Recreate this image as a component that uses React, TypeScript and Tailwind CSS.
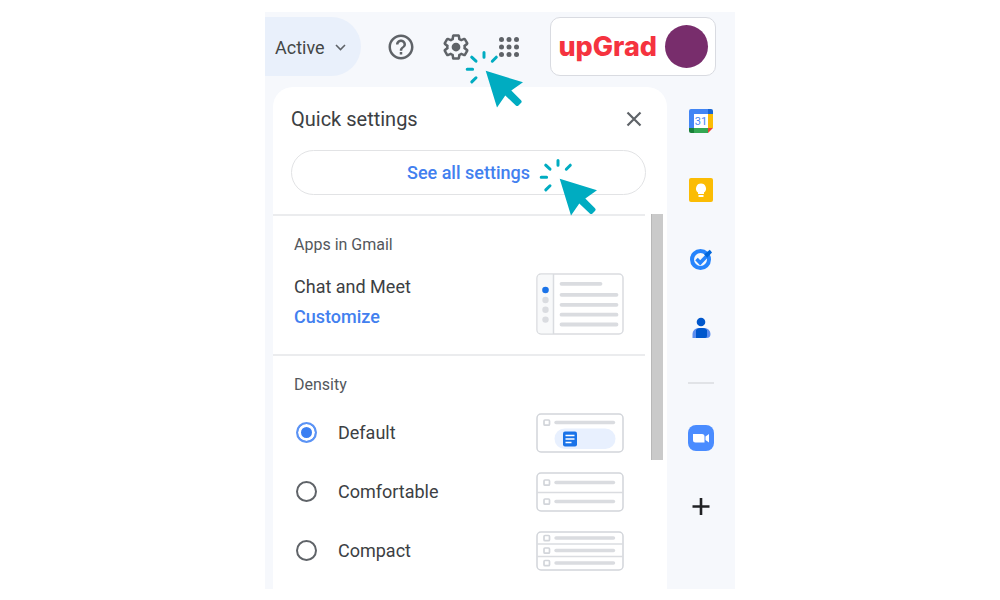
import { useState } from "react";

const GEAR =
  "M13.85 22.25h-3.7c-.74 0-1.36-.54-1.45-1.27l-.27-1.89c-.27-.14-.53-.29-.79-.46l-1.8.72c-.7.26-1.47-.03-1.81-.65L2.2 15.53c-.35-.66-.2-1.44.36-1.88l1.53-1.19c-.01-.15-.02-.3-.02-.46 0-.15.01-.31.02-.46l-1.52-1.19c-.59-.45-.74-1.26-.37-1.88l1.85-3.19c.34-.62 1.11-.9 1.79-.63l1.81.73c.26-.17.52-.32.78-.46l.27-1.91c.09-.7.71-1.25 1.44-1.25h3.7c.74 0 1.36.54 1.45 1.27l.27 1.89c.27.14.53.29.79.46l1.8-.72c.71-.26 1.48.03 1.82.65l1.84 3.18c.36.66.2 1.44-.36 1.88l-1.52 1.19c.01.15.02.3.02.46s-.01.31-.02.46l1.52 1.19c.56.45.72 1.23.37 1.86l-1.86 3.22c-.34.62-1.11.9-1.8.63l-1.8-.72c-.26.17-.52.32-.78.46l-.27 1.91c-.1.68-.72 1.22-1.46 1.22zm-3.23-2h2.76l.37-2.55.53-.22c.44-.18.88-.44 1.34-.78l.45-.34 2.38.96 1.38-2.4-2.03-1.58.07-.56c.03-.26.06-.51.06-.78s-.03-.53-.06-.78l-.07-.56 2.03-1.58-1.39-2.4-2.39.96-.45-.35c-.42-.32-.87-.58-1.33-.77l-.52-.22-.37-2.55h-2.76l-.37 2.55-.53.21c-.44.19-.88.44-1.34.79l-.45.33-2.38-.95-1.39 2.39 2.03 1.58-.07.56a7 7 0 0 0-.06.79c0 .26.02.53.06.78l.07.56-2.03 1.58 1.38 2.4 2.39-.96.45.35c.43.33.86.58 1.33.77l.53.22.38 2.55z";

function ClickCursor() {
  return (
    <svg width="60" height="60" viewBox="0 0 60 60" aria-hidden="true">
      <path
        d="M21.7 21.7 59 33.3 47.3 41.6 57 51.2Q58.3 52.6 57.2 53.8L54.5 56.5Q53.2 57.7 51.8 56.4L41.3 46.6 33 58.6Z"
        fill="#00acc1"
      />
      <path
        d="M3.2 20.3h5.4M7.7 8.2l4.3 4M20 3.4v4.8M32.3 8.2l-4 4M12 28.8l-4.2 4.1"
        stroke="#00acc1"
        strokeWidth="3"
        strokeLinecap="round"
        fill="none"
      />
    </svg>
  );
}

function HelpIcon() {
  return (
    <svg width="30" height="30" viewBox="0 0 24 24" fill="#5f6368" aria-hidden="true">
      <path d="M11 18h2v-2h-2v2zm1-16C6.48 2 2 6.48 2 12s4.48 10 10 10 10-4.48 10-10S17.52 2 12 2zm0 18c-4.41 0-8-3.59-8-8s3.59-8 8-8 8 3.59 8 8-3.59 8-8 8zm0-14c-2.21 0-4 1.79-4 4h2c0-1.1.9-2 2-2s2 .9 2 2c0 2-3 1.75-3 5h2c0-2.25 3-2.5 3-5 0-2.21-1.79-4-4-4z" />
    </svg>
  );
}

function AppsIcon() {
  const at = [6, 12, 18];
  return (
    <svg width="30" height="30" viewBox="0 0 24 24" fill="#5f6368" aria-hidden="true">
      {at.map((y) => at.map((x) => <circle key={`${x}-${y}`} cx={x} cy={y} r="2" />))}
    </svg>
  );
}

function CalendarIcon() {
  return (
    <svg width="24" height="24" viewBox="0 0 24 24" aria-hidden="true">
      <path d="M2 0H19V5H5V19H0V2Q0 0 2 0Z" fill="#4285f4" />
      <path d="M19 0H22Q24 0 24 2V5H19Z" fill="#1967d2" />
      <path d="M19 5H24V19H19Z" fill="#fbbc04" />
      <path d="M5 19H19V24H5Z" fill="#34a853" />
      <path d="M0 19H5V24H2Q0 24 0 22Z" fill="#188038" />
      <path d="M19 19H24L19 24Z" fill="#ea4335" />
      <path d="M5 5H19V19H5Z" fill="#fff" />
      <text x="12" y="16" textAnchor="middle" fontSize="11" fontFamily="Roboto, sans-serif" fill="#4285f4">
        31
      </text>
    </svg>
  );
}

function KeepIcon() {
  return (
    <svg width="24" height="24" viewBox="0 0 24 24" aria-hidden="true">
      <rect width="24" height="24" rx="2" fill="#fbbc04" />
      <path d="M12 5.5a5 5 0 0 0-3 9V16h6v-1.5a5 5 0 0 0-3-9ZM9.5 17h5v2h-5Z" fill="#fff" />
    </svg>
  );
}

function TasksIcon() {
  return (
    <svg width="24" height="24" viewBox="0 0 24 24" fill="none" aria-hidden="true">
      <circle cx="11.5" cy="12.5" r="8.5" stroke="#2684fc" strokeWidth="4" />
      <path d="m7.5 12 3.7 3.8 8-8.3" stroke="#2684fc" strokeWidth="3.6" />
      <path d="m15.2 7.5 5.6-4.8 2.2 2.7-4.800 5.300Z" fill="#0066da" />
    </svg>
  );
}

function ContactsIcon() {
  return (
    <svg width="24" height="24" viewBox="0 0 24 24" aria-hidden="true">
      <circle cx="12" cy="6" r="4.3" fill="#0057cc" />
      <path d="M3.5 22v-4a6 6 0 0 1 6-6h6a6 6 0 0 1 6 6q0 4-4 4Z" fill="#5b8def" />
      <path d="M7 22v-8q1.500-2 4-2h3q2.500 0 4 2v6q0 2-2 2Z" fill="#0057cc" />
    </svg>
  );
}

function ZoomIcon() {
  return (
    <svg width="26" height="26" viewBox="0 0 26 26" aria-hidden="true">
      <rect width="26" height="26" rx="8" fill="#4a8cff" />
      <path d="M5 9h9q2.500 0 2.500 2.500V17.500H7.500Q5 17.500 5 15ZM17.500 11.500 21 9v8.500l-3.500-2.500Z" fill="#fff" />
    </svg>
  );
}

function PlusIcon() {
  return (
    <svg width="24" height="24" viewBox="0 0 24 24" aria-hidden="true">
      <path d="M12 4v17M3.5 12.5h17" stroke="#202124" strokeWidth="2.6" />
    </svg>
  );
}

function LayoutThumb() {
  return (
    <svg width="88" height="62" viewBox="0 0 88 62" className="shrink-0" aria-hidden="true">
      <rect x="1" y="1" width="86" height="60" rx="4" fill="#fff" stroke="#dadce0" strokeWidth="1.5" />
      <path d="M17.5 1.7H5Q1.7 1.7 1.7 5V57Q1.7 60.3 5 60.3H17.5Z" fill="#f8f9fa" />
      <path d="M17.5 1V61" stroke="#dadce0" strokeWidth="1.5" />
      <circle cx="9.5" cy="17" r="3.3" fill="#1a73e8" />
      {[27, 36.8, 46.6].map((y) => (
        <circle key={y} cx="9.5" cy={y} r="3.2" fill="#dadce0" />
      ))}
      <path
        d="M25.5 10.8h39M25.5 21.8h55M25.5 31.8h55M25.5 41.7h55M25.5 51.5h55"
        stroke="#dadce0"
        strokeWidth="3.8"
        strokeLinecap="round"
      />
    </svg>
  );
}

type Density = "Default" | "Comfortable" | "Compact";

const THUMB_ROWS: Record<Density, number[]> = {
  Default: [9.5],
  Comfortable: [10.5, 29.5],
  Compact: [7, 19.5, 32],
};

const THUMB_RULES: Record<Density, number[]> = {
  Default: [],
  Comfortable: [20.5],
  Compact: [13, 25.5],
};

function DensityThumb({ kind }: { kind: Density }) {
  return (
    <svg width="88" height="40" viewBox="0 0 88 40" className="shrink-0" aria-hidden="true">
      <rect x="1" y="1" width="86" height="38" rx="4" fill="#fff" stroke="#d2d5da" strokeWidth="1.5" />
      {THUMB_RULES[kind].map((y) => (
        <path key={y} d={`M1 ${y}H87`} stroke="#dadce0" strokeWidth="1.5" />
      ))}
      {THUMB_ROWS[kind].map((y) => (
        <g key={y}>
          <rect x="8" y={y - 2.5} width="5.5" height="5.2" rx="1" fill="none" stroke="#d2d5da" strokeWidth="1.7" />
          <path d={`M20 ${y}H77.5`} stroke="#dadce0" strokeWidth="3.4" strokeLinecap="round" />
        </g>
      ))}
      {kind === "Default" && (
        <g>
          <rect x="18.5" y="15.5" width="61" height="20.5" rx="10.2" fill="#e8f0fe" />
          <rect x="27" y="18.5" width="14" height="15" rx="2" fill="#1a73e8" />
          <path d="M29.5 22.5h9M29.5 26h9M29.5 29.5h6" stroke="#fff" strokeWidth="1.5" />
        </g>
      )}
    </svg>
  );
}

const OPTIONS: Density[] = ["Default", "Comfortable", "Compact"];

const APPS = [
  { name: "Calendar", Icon: CalendarIcon },
  { name: "Keep", Icon: KeepIcon },
  { name: "Tasks", Icon: TasksIcon },
  { name: "Contacts", Icon: ContactsIcon },
];

export default function App() {
  const [density, setDensity] = useState<Density>("Default");

  return (
    <div className="min-h-screen bg-white py-3 font-[Roboto,'Liberation_Sans',sans-serif] text-[#3c4043]">
      <div className="mx-auto w-full max-w-[470px] bg-[#f6f8fc]">
        <header className="flex items-center gap-[25px] pt-[5px] pr-[19px] pb-[11px]">
          <button className="flex h-[59px] w-24 shrink-0 items-center gap-2.5 rounded-r-full bg-[#e9f0fb] pt-0.5 pl-2.5 text-lg text-[#444746]">
            Active
            <svg width="11" height="7" viewBox="0 0 11 7" fill="none" aria-hidden="true">
              <path d="m1 1 4.5 4.5L10 1" stroke="#5f6368" strokeWidth="1.6" />
            </svg>
          </button>
          <button aria-label="Support" className="shrink-0">
            <HelpIcon />
          </button>
          <button aria-label="Settings" className="relative shrink-0">
            <svg width="30" height="30" viewBox="0 0 24 24" fill="#5f6368" aria-hidden="true">
              <path d={GEAR} />
              <circle cx="12" cy="12" r="3.5" />
            </svg>
            <span className="pointer-events-none absolute top-[17px] left-[23px] z-10">
              <ClickCursor />
            </span>
          </button>
          <button aria-label="Google apps" className="-ml-0.5 shrink-0">
            <AppsIcon />
          </button>
          <button
            aria-label="upGrad account"
            className="ml-auto flex h-[59px] items-center gap-2 rounded-[10px] border border-[#d9dbe1] bg-white px-[7px]"
          >
            <span className="font-[Inter,sans-serif] text-[27px] leading-8 font-extrabold text-[#f5333f]">upGrad</span>
            <span className="size-[43px] rounded-full bg-[#782d6c]" />
          </button>
        </header>

        <div className="flex">
          <section className="ml-2 min-w-0 flex-1 rounded-t-[20px] bg-white">
            <div className="flex h-[63px] items-center justify-between pr-6 pl-[18px]">
              <h1 className="text-xl">Quick settings</h1>
              <button aria-label="Close">
                <svg width="18" height="18" viewBox="0 0 18 18" fill="none" aria-hidden="true">
                  <path d="m2.5 2.5 13 13M15.5 2.5l-13 13" stroke="#5f6368" strokeWidth="2.2" />
                </svg>
              </button>
            </div>
            <div className="pr-[21px] pb-[19px] pl-[18px]">
              <button className="relative h-[45px] w-full rounded-full border border-[#e2e3e5] text-lg font-medium text-[#4280ef]">
                See all settings
                <span className="pointer-events-none absolute top-1.5 left-1/2 z-10 ml-[69px]">
                  <ClickCursor />
                </span>
              </button>
            </div>

            <div className="flex justify-between pr-1">
              <div className="mr-1.5 min-w-0 flex-1">
                <section className="border-t-2 border-[#ebecee] pt-[19px] pr-[21px] pb-[19px] pl-[21px]">
                  <h2 className="text-base leading-5 text-[#53575c]">Apps in Gmail</h2>
                  <div className="mt-[18px] flex justify-between">
                    <div className="-mt-px text-lg leading-[30px]">
                      <p>Chat and Meet</p>
                      <a href="#customize" className="font-medium text-[#4280ef]">
                        Customize
                      </a>
                    </div>
                    <LayoutThumb />
                  </div>
                </section>
                <fieldset className="border-t-2 border-[#ebecee] pr-[21px] pb-[9px] pl-[21px]">
                  <legend className="float-left mt-[19px] w-full text-base leading-5 text-[#53575c]">Density</legend>
                  <div className="clear-both pt-2">
                    {OPTIONS.map((option) => (
                      <label key={option} className="flex h-[59px] items-center text-lg">
                        <input
                          type="radio"
                          name="density"
                          checked={density === option}
                          onChange={() => setDensity(option)}
                          className="ml-0.5 size-[21px] appearance-none rounded-full border-2 border-[#5f6368] checked:border-[#5b93f5] checked:bg-[#3b7ff2] checked:shadow-[inset_0_0_0_3px_#fff]"
                        />
                        <span className="mr-auto ml-[21px]">{option}</span>
                        <DensityThumb kind={option} />
                      </label>
                    ))}
                  </div>
                </fieldset>
              </div>
              <div className="h-[246px] w-3 border-l border-[#b8b8b8] bg-[#cacaca]" />
            </div>
          </section>

          <aside className="flex w-[68px] flex-col items-center pt-[22px]">
            <nav aria-label="Side panel" className="flex flex-col gap-[45px]">
              {APPS.map(({ name, Icon }) => (
                <button key={name} aria-label={name}>
                  <Icon />
                </button>
              ))}
            </nav>
            <hr className="mt-[42px] w-[26px] border-t-2 border-[#e1e3e7]" />
            <button aria-label="Zoom" className="mt-[41px]">
              <ZoomIcon />
            </button>
            <button aria-label="Get add-ons" className="mt-[43px]">
              <PlusIcon />
            </button>
          </aside>
        </div>
      </div>
    </div>
  );
}
